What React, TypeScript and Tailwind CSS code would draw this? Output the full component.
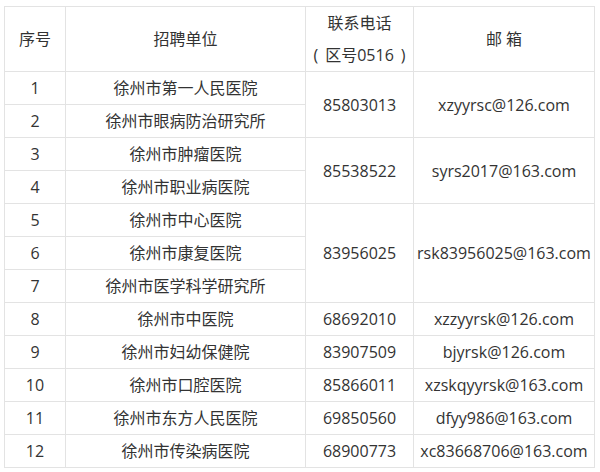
const rows: { no: number; unit: string; phone?: string; mail?: string; span?: number }[] = [
  { no: 1, unit: "徐州市第一人民医院", phone: "85803013", mail: "xzyyrsc@126.com", span: 2 },
  { no: 2, unit: "徐州市眼病防治研究所" },
  { no: 3, unit: "徐州市肿瘤医院", phone: "85538522", mail: "syrs2017@163.com", span: 2 },
  { no: 4, unit: "徐州市职业病医院" },
  { no: 5, unit: "徐州市中心医院", phone: "83956025", mail: "rsk83956025@163.com", span: 3 },
  { no: 6, unit: "徐州市康复医院" },
  { no: 7, unit: "徐州市医学科学研究所" },
  { no: 8, unit: "徐州市中医院", phone: "68692010", mail: "xzzyyrsk@126.com", span: 1 },
  { no: 9, unit: "徐州市妇幼保健院", phone: "83907509", mail: "bjyrsk@126.com", span: 1 },
  { no: 10, unit: "徐州市口腔医院", phone: "85866011", mail: "xzskqyyrsk@163.com", span: 1 },
  { no: 11, unit: "徐州市东方人民医院", phone: "69850560", mail: "dfyy986@163.com", span: 1 },
  { no: 12, unit: "徐州市传染病医院", phone: "68900773", mail: "xc83668706@163.com", span: 1 },
];

const cell = "border border-[#e3e3e3] p-0 whitespace-nowrap overflow-visible";

export default function App() {
  return (
    <div className="h-[472px] w-[600px] bg-white pl-[4px] pt-[6px] font-['Open_Sans','Noto_Sans_CJK_SC',sans-serif] text-[16px] leading-[32px] text-[#333]">
      <table className="w-[590px] table-fixed border-collapse text-center">
        <colgroup>
          <col className="w-[61px]" />
          <col className="w-[240px]" />
          <col className="w-[108px]" />
          <col className="w-[181px]" />
        </colgroup>
        <thead>
          <tr>
            <th className={`${cell} font-normal`}>序号</th>
            <th className={`${cell} font-normal`}>招聘单位</th>
            <th className={`${cell} font-normal`}>
              <div>联系电话</div>
              <div>
                <span className="pr-[7px]">(</span>区号0516<span className="pl-[7px]">)</span>
              </div>
            </th>
            <th className={`${cell} font-normal`}>邮 箱</th>
          </tr>
        </thead>
        <tbody>
          {rows.map((r) => (
            <tr key={r.no}>
              <td className={cell}>{r.no}</td>
              <td className={cell}>{r.unit}</td>
              {r.span && (
                <>
                  <td className={cell} rowSpan={r.span}>
                    {r.phone}
                  </td>
                  <td className={cell} rowSpan={r.span}>
                    {r.mail}
                  </td>
                </>
              )}
            </tr>
          ))}
        </tbody>
      </table>
    </div>
  );
}
